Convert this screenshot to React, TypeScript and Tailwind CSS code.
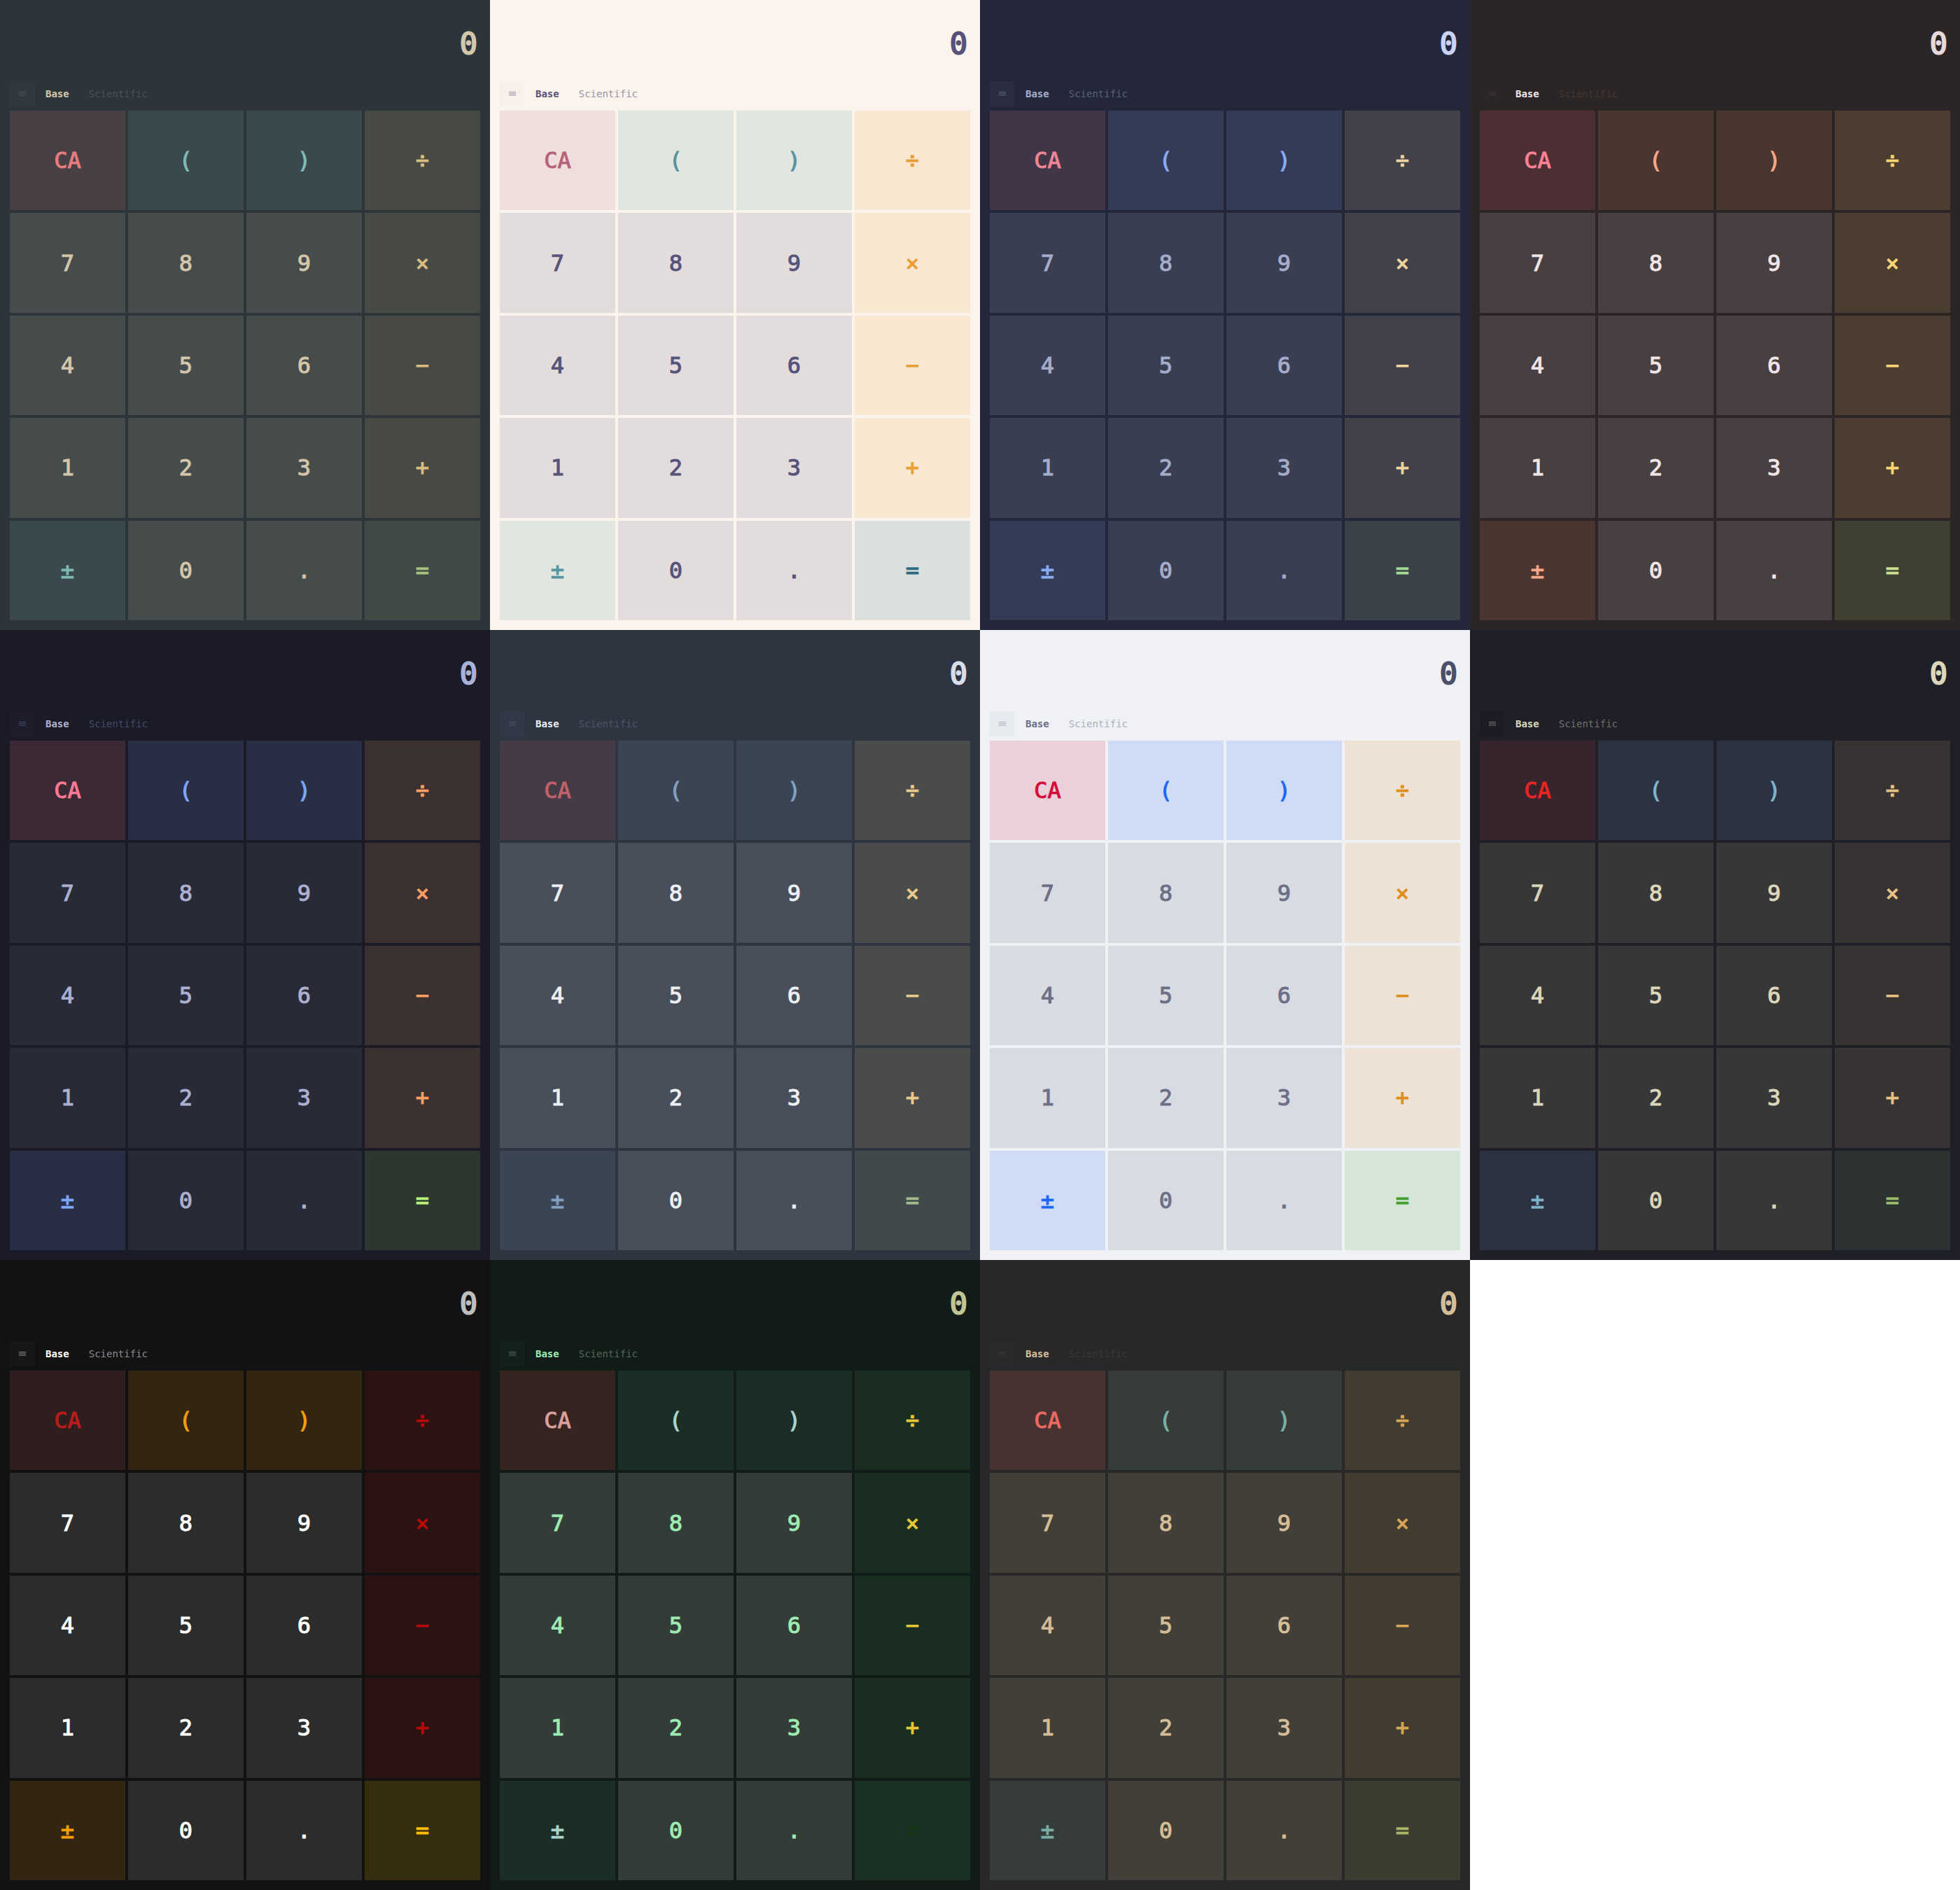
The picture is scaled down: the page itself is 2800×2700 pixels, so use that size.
type Kind = 'num' | 'clear' | 'fn' | 'op' | 'eq';

type Theme = Record<Kind, string> & {
  name: string;
  panel: string;
  display: string;
  active: string;
  muted: string;
  menu: string;
};

const themes: Theme[] = [
  {
    name: 'Everforest',
    panel: 'bg-[#2d353b]',
    display: 'text-[#d3c6aa]',
    active: 'text-[#d3c6aa]',
    muted: 'text-[#475258]',
    menu: 'bg-[#31393f] text-[#475258]',
    num: 'bg-[#464b4c] text-[#d3c6aa]',
    clear: 'bg-[#494045] text-[#e67e80]',
    fn: 'bg-[#39494d] text-[#7fbbb3]',
    op: 'bg-[#474945] text-[#dbbc7f]',
    eq: 'bg-[#3f4a45] text-[#a7c080]',
  },
  {
    name: 'Rose Pine',
    panel: 'bg-[#faf4ed]',
    display: 'text-[#575279]',
    active: 'text-[#575279]',
    muted: 'text-[#9893a5]',
    menu: 'bg-[#f8f1ea] text-[#9893a5]',
    num: 'bg-[#e2dcdc] text-[#575279]',
    clear: 'bg-[#f0dedc] text-[#b4637a]',
    fn: 'bg-[#e1e6e1] text-[#56949f]',
    op: 'bg-[#f8e7d1] text-[#ea9d34]',
    eq: 'bg-[#dbdfdd] text-[#286983]',
  },
  {
    name: 'Macchiato',
    panel: 'bg-[#24273a]',
    display: 'text-[#cad3f5]',
    active: 'text-[#a5adcb]',
    muted: 'text-[#5b6078]',
    menu: 'bg-[#2a2d42] text-[#5b6078]',
    num: 'bg-[#3a3e53] text-[#a5adcb]',
    clear: 'bg-[#423548] text-[#ed8796]',
    fn: 'bg-[#333b56] text-[#8aadf4]',
    op: 'bg-[#424149] text-[#eed49f]',
    eq: 'bg-[#384248] text-[#a6da95]',
  },
  {
    name: 'Ristretto',
    panel: 'bg-[#2c2525]',
    display: 'text-[#e6d9db]',
    active: 'text-[#f1e5e7]',
    muted: 'text-[#403838]',
    menu: 'bg-[#2c2525] text-[#403838]',
    num: 'bg-[#484040] text-[#f1e5e7]',
    clear: 'bg-[#4b2f33] text-[#ff8297]',
    fn: 'bg-[#4a3530] text-[#f8a788]',
    op: 'bg-[#4b3e30] text-[#fcd675]',
    eq: 'bg-[#3f4031] text-[#c8e292]',
  },
  {
    name: 'Tokyo Night',
    panel: 'bg-[#1a1b26]',
    display: 'text-[#a9b1d6]',
    active: 'text-[#acb0d0]',
    muted: 'text-[#444b6a]',
    menu: 'bg-[#1d1e2a] text-[#444b6a]',
    num: 'bg-[#282a37] text-[#acb0d0]',
    clear: 'bg-[#3b2936] text-[#ff7a93]',
    fn: 'bg-[#282f45] text-[#7da6ff]',
    op: 'bg-[#3a3130] text-[#ff9e64]',
    eq: 'bg-[#2e3630] text-[#b9f27c]',
  },
  {
    name: 'Nord',
    panel: 'bg-[#2e3440]',
    display: 'text-[#d8dee9]',
    active: 'text-[#eceff4]',
    muted: 'text-[#4c566a]',
    menu: 'bg-[#313947] text-[#4c566a]',
    num: 'bg-[#494f5a] text-[#eceff4]',
    clear: 'bg-[#443b46] text-[#bf616a]',
    fn: 'bg-[#3a4453] text-[#81a1c1]',
    op: 'bg-[#4a4b4b] text-[#ebcb8b]',
    eq: 'bg-[#40494b] text-[#a3be8c]',
  },
  {
    name: 'Latte',
    panel: 'bg-[#eff1f5]',
    display: 'text-[#4c4f69]',
    active: 'text-[#6c6f85]',
    muted: 'text-[#acb0be]',
    menu: 'bg-[#e7eaef] text-[#acb0be]',
    num: 'bg-[#d9dbe2] text-[#6c6f85]',
    clear: 'bg-[#ebcfd9] text-[#d20f39]',
    fn: 'bg-[#d0dcf5] text-[#1e66f5]',
    op: 'bg-[#ede2d5] text-[#df8e1d]',
    eq: 'bg-[#d5e5d7] text-[#40a02b]',
  },
  {
    name: 'Kanagawa',
    panel: 'bg-[#1f1f28]',
    display: 'text-[#dcd7ba]',
    active: 'text-[#dcd7ba]',
    muted: 'text-[#727169]',
    menu: 'bg-[#1c1c24] text-[#727169]',
    num: 'bg-[#383738] text-[#dcd7ba]',
    clear: 'bg-[#38242c] text-[#e82424]',
    fn: 'bg-[#2d3242] text-[#7fb4ca]',
    op: 'bg-[#373333] text-[#e6c384]',
    eq: 'bg-[#2c3132] text-[#98bb6c]',
  },
  {
    name: 'Matte Black',
    panel: 'bg-[#121212]',
    display: 'text-[#bebebe]',
    active: 'text-[#ffffff]',
    muted: 'text-[#8a8a8d]',
    menu: 'bg-[#171717] text-[#8a8a8d]',
    num: 'bg-[#2c2c2c] text-[#ffffff]',
    clear: 'bg-[#2f1e1e] text-[#b91c1c]',
    fn: 'bg-[#322511] text-[#f59e0b]',
    op: 'bg-[#2b1313] text-[#b90a0a]',
    eq: 'bg-[#362c10] text-[#ffc107]',
  },
  {
    name: 'Osaka Jade',
    panel: 'bg-[#111c18]',
    display: 'text-[#c1c497]',
    active: 'text-[#9eebb3]',
    muted: 'text-[#53685b]',
    menu: 'bg-[#13201c] text-[#53685b]',
    num: 'bg-[#333c36] text-[#9eebb3]',
    clear: 'bg-[#35241f] text-[#db9f9c]',
    fn: 'bg-[#1a2e26] text-[#acd4cf]',
    op: 'bg-[#192e21] text-[#e5c736]',
    eq: 'bg-[#1b3024] text-[#143614]',
  },
  {
    name: 'Gruvbox',
    panel: 'bg-[#282828]',
    display: 'text-[#d4be98]',
    active: 'text-[#d4be98]',
    muted: 'text-[#3c3836]',
    menu: 'bg-[#2a2a2a] text-[#3c3836]',
    num: 'bg-[#423f39] text-[#d4be98]',
    clear: 'bg-[#453231] text-[#ea6962]',
    fn: 'bg-[#353c3a] text-[#7daea3]',
    op: 'bg-[#423b2f] text-[#d8a657]',
    eq: 'bg-[#3b3d31] text-[#a9b665]',
  },
];

const keys: [string, Kind][] = [
  ['CA', 'clear'], ['(', 'fn'], [')', 'fn'], ['÷', 'op'],
  ['7', 'num'], ['8', 'num'], ['9', 'num'], ['×', 'op'],
  ['4', 'num'], ['5', 'num'], ['6', 'num'], ['−', 'op'],
  ['1', 'num'], ['2', 'num'], ['3', 'num'], ['+', 'op'],
  ['±', 'fn'], ['0', 'num'], ['.', 'num'], ['=', 'eq'],
];

function MenuIcon() {
  return (
    <svg width="10" height="6" viewBox="0 0 10 6" fill="currentColor" aria-hidden="true">
      <rect width="10" height="1" />
      <rect y="2.3" width="10" height="1" />
      <rect y="4.6" width="10" height="1" />
    </svg>
  );
}

function Calculator({ theme }: { theme: Theme }) {
  return (
    <section aria-label={theme.name} className={`flex min-w-0 flex-col px-3.5 pb-3.5 ${theme.panel}`}>
      <output className={`flex h-29 items-center justify-end pt-2 pr-1 text-[42px] [-webkit-text-stroke:2px] ${theme.display}`}>
        0
      </output>
      <nav className="mb-1.5 flex h-9 items-stretch text-sm">
        <button type="button" aria-label="Menu" className={`mr-0.5 flex w-[35px] items-center justify-center ${theme.menu}`}>
          <MenuIcon />
        </button>
        <button type="button" className={`px-3.5 font-bold ${theme.active}`}>Base</button>
        <button type="button" className={`px-3.5 ${theme.muted}`}>Scientific</button>
      </nav>
      <div className="grid flex-1 grid-cols-4 grid-rows-5 gap-1">
        {keys.map(([label, kind]) => (
          <button key={label} type="button" className={`text-[32px] [-webkit-text-stroke:1px] ${theme[kind]}`}>
            {label}
          </button>
        ))}
      </div>
    </section>
  );
}

export default function App() {
  return (
    <main className="grid min-h-screen grid-cols-4 grid-rows-3 bg-white font-['DejaVu_Sans_Mono',monospace]">
      {themes.map((theme) => (
        <Calculator key={theme.name} theme={theme} />
      ))}
    </main>
  );
}
